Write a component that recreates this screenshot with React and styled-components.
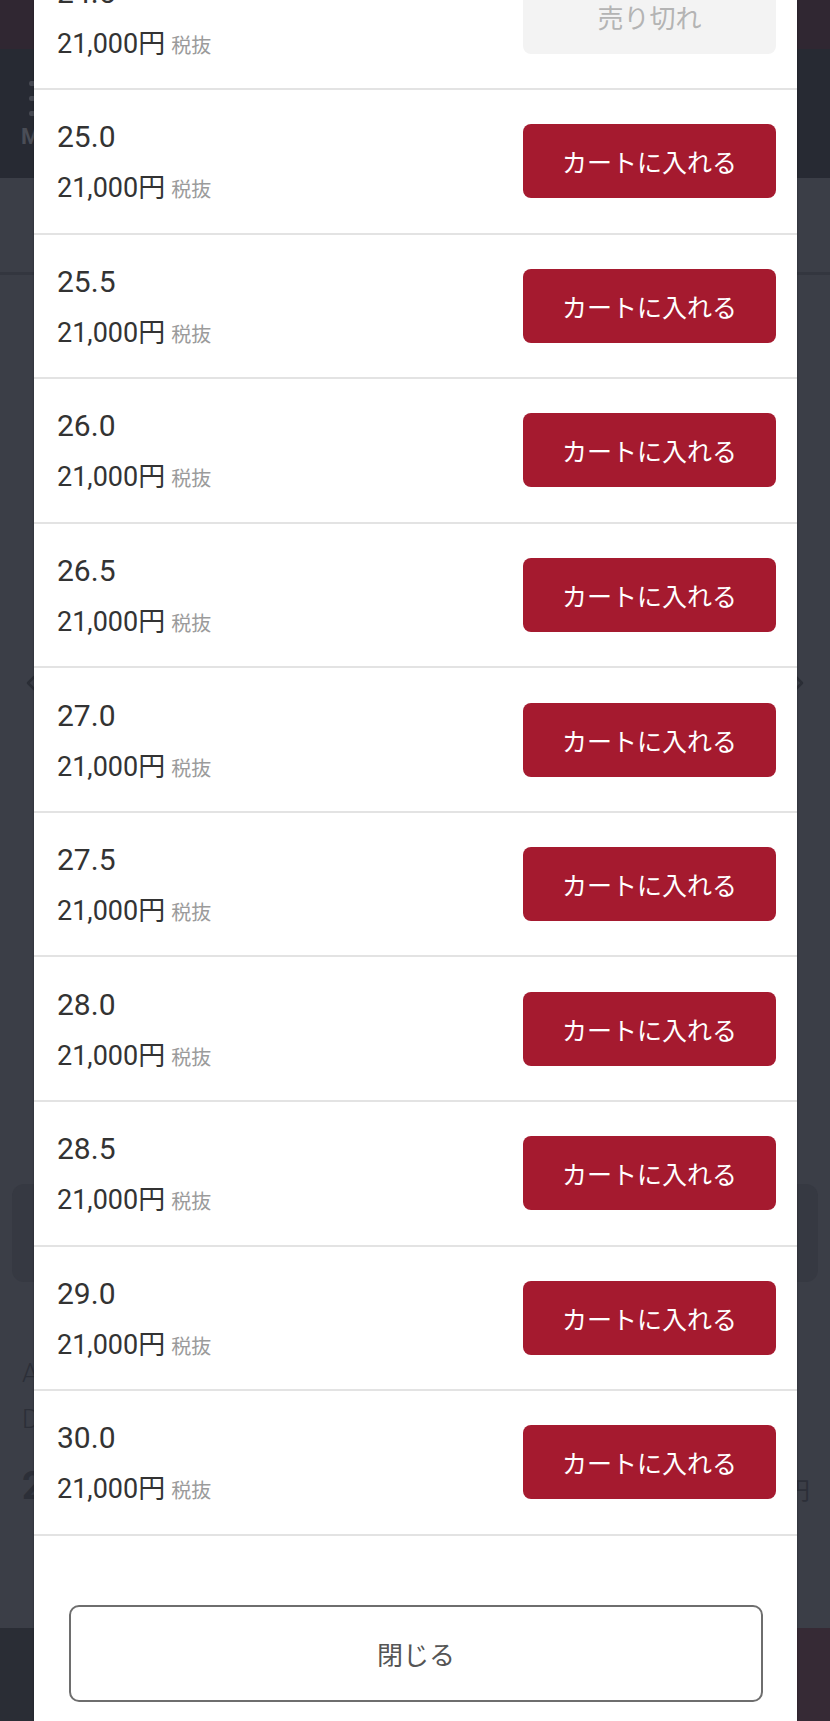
import React from 'react';
import styled, { createGlobalStyle } from 'styled-components';

const GlobalStyle = createGlobalStyle`
  html, body { margin: 0; padding: 0; }
  body {
    background: #3b3e47;
    font-family: Roboto, "Noto Sans CJK JP", sans-serif;
  }
  * { box-sizing: border-box; }
`;

const Screen = styled.div`
  position: relative;
  width: 830px;
  height: 1721px;
  overflow: hidden;
`;

/* ---------- dimmed page underneath ---------- */
const Page = styled.div`
  display: flex;
  flex-direction: column;
  height: 100%;
  background: #3b3e47;
`;

const TopBar = styled.div`
  height: 49px;
  flex-shrink: 0;
  background: #302732;
`;

const Header = styled.header`
  height: 129px;
  flex-shrink: 0;
  background: #272a33;
  display: flex;
  align-items: center;
  padding-left: 21px;
`;

const Logo = styled.div`
  display: flex;
  flex-direction: column;
  gap: 8px;
  margin-top: 4px;
`;

const LogoMark = styled.div`
  display: flex;
  flex-direction: column;
  gap: 10px;
  padding-left: 8px;
`;

const LogoBar = styled.span`
  display: block;
  width: 14px;
  height: 5px;
  border-radius: 2px;
  background: #464952;
`;

const LogoText = styled.div`
  font: 700 22px/26px Roboto, sans-serif;
  letter-spacing: 1px;
  color: #4a4d56;
`;

const Tabs = styled.nav`
  height: 97px;
  flex-shrink: 0;
  border-bottom: 3px solid #33363f;
`;

const Carousel = styled.div`
  height: 816px;
  display: flex;
  align-items: center;
  justify-content: space-between;
  padding: 0 26px;
`;

const InfoBox = styled.div`
  height: 98px;
  margin: 93px 12px 0;
  border-radius: 12px;
  background: #363942;
`;

const Details = styled.div`
  display: flex;
  flex-direction: column;
  gap: 20px;
  padding: 78px 20px 0 22px;
  color: #2c2f38;
`;

const DetailLine = styled.div`
  font: 300 26px/26px Roboto, "Noto Sans CJK JP", sans-serif;
`;

const PriceLine = styled.div`
  display: flex;
  justify-content: space-between;
  align-items: baseline;
  margin-top: 14px;
`;

const BigPrice = styled.span`
  font: 700 38px/40px Roboto, "Noto Sans CJK JP", sans-serif;
`;

const SubPrice = styled.span`
  font: 400 24px/30px Roboto, "Noto Sans CJK JP", sans-serif;
`;

const BottomBar = styled.div`
  margin-top: auto;
  height: 93px;
  display: grid;
  grid-template-columns: 1fr 1fr;
`;

const BottomHalf = styled.div`
  background: ${(p) => (p.$accent ? '#362a35' : '#2a2d35')};
`;

const Chevron = ({ dir }) => (
  <svg width="10" height="16" viewBox="0 0 10 16" fill="none">
    <path
      d={dir === 'left' ? 'M8 2 L2 8 L8 14' : 'M2 2 L8 8 L2 14'}
      stroke="#2b2e36"
      strokeWidth="2.5"
      strokeLinecap="round"
      strokeLinejoin="round"
    />
  </svg>
);

/* ---------- modal sheet ---------- */
const Sheet = styled.div`
  position: absolute;
  top: 0;
  bottom: 0;
  left: 34px;
  width: 763px;
  background: #ffffff;
  box-shadow: 0 0 2px rgba(0, 0, 0, 0.35);
  overflow: hidden;
  display: flex;
  flex-direction: column;
`;

const SizeList = styled.ul`
  list-style: none;
  margin: -54.5px 0 0;
  padding: 0;
`;

const SizeRow = styled.li`
  height: 144.57px;
  flex-shrink: 0;
  border-bottom: 2px solid #e3e3e3;
  display: flex;
  align-items: center;
  justify-content: space-between;
  padding: 0 21px 0 23px;
`;

const RowInfo = styled.div`
  display: flex;
  flex-direction: column;
  gap: 16px;
  padding-top: 3px;
`;

const SizeLabel = styled.div`
  font: 400 30px/36px Roboto, "Noto Sans CJK JP", sans-serif;
  color: #333333;
`;

const Price = styled.div`
  font: 400 27px/34px Roboto, "Noto Sans CJK JP", sans-serif;
  color: #333333;
  display: flex;
  align-items: baseline;
`;

const Tax = styled.span`
  margin-left: 6px;
  font: 400 20px/34px "Noto Sans CJK JP", sans-serif;
  color: #9b9b9b;
`;

const CartButton = styled.button`
  width: 253px;
  height: 74px;
  border: none;
  border-radius: 8px;
  background: ${(p) => (p.$soldOut ? '#f3f3f3' : '#a51a2f')};
  color: ${(p) => (p.$soldOut ? '#b4b4b4' : '#ffffff')};
  font: 400 ${(p) => (p.$soldOut ? '26px' : '25px')} "Noto Sans CJK JP", sans-serif;
  cursor: pointer;
`;

const Footer = styled.div`
  padding: 69.5px 34px 0 35px;
`;

const CloseButton = styled.button`
  width: 100%;
  height: 97px;
  border: 2px solid #6e6e6e;
  border-radius: 10px;
  background: #ffffff;
  color: #555555;
  font: 400 26px "Noto Sans CJK JP", sans-serif;
  cursor: pointer;
`;

const sizes = [
  { size: '24.5', soldOut: true },
  { size: '25.0' },
  { size: '25.5' },
  { size: '26.0' },
  { size: '26.5' },
  { size: '27.0' },
  { size: '27.5' },
  { size: '28.0' },
  { size: '28.5' },
  { size: '29.0' },
  { size: '30.0' },
];

export default function App() {
  return (
    <Screen>
      <GlobalStyle />
      <Page>
        <TopBar />
        <Header>
          <Logo>
            <LogoMark>
              <LogoBar />
              <LogoBar />
              <LogoBar />
            </LogoMark>
            <LogoText>MONOKOTO</LogoText>
          </Logo>
        </Header>
        <Tabs />
        <Carousel>
          <Chevron dir="left" />
          <Chevron dir="right" />
        </Carousel>
        <InfoBox />
        <Details>
          <DetailLine>Air Jordan 1 Retro High OG</DetailLine>
          <DetailLine>DZ5485-612</DetailLine>
          <PriceLine>
            <BigPrice>21,000円</BigPrice>
            <SubPrice>税込 23,100円</SubPrice>
          </PriceLine>
        </Details>
        <BottomBar>
          <BottomHalf />
          <BottomHalf $accent />
        </BottomBar>
      </Page>

      <Sheet>
        <SizeList>
          {sizes.map(({ size, soldOut }) => (
            <SizeRow key={size}>
              <RowInfo>
                <SizeLabel>{size}</SizeLabel>
                <Price>
                  21,000円<Tax>税抜</Tax>
                </Price>
              </RowInfo>
              <CartButton $soldOut={soldOut} disabled={soldOut}>
                {soldOut ? '売り切れ' : 'カートに入れる'}
              </CartButton>
            </SizeRow>
          ))}
        </SizeList>
        <Footer>
          <CloseButton>閉じる</CloseButton>
        </Footer>
      </Sheet>
    </Screen>
  );
}
